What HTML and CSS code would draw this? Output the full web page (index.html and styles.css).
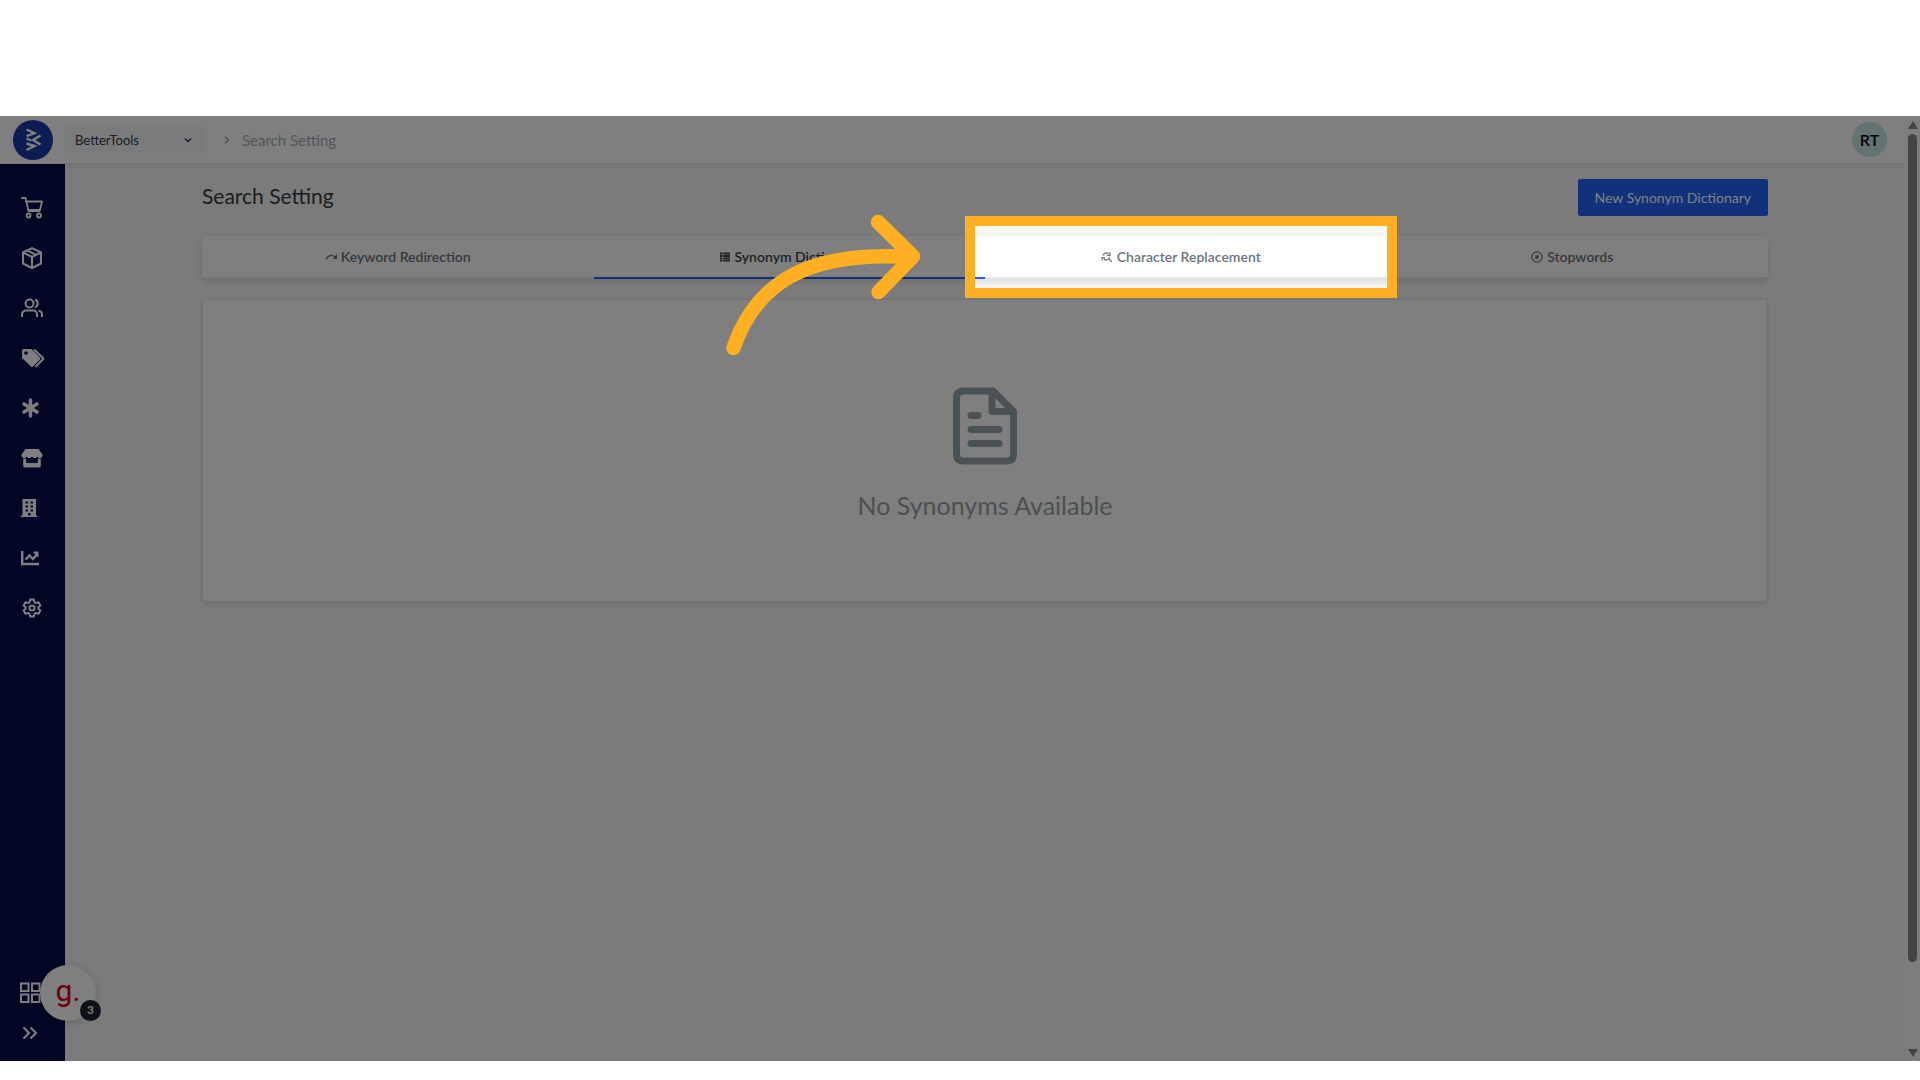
FILE: index.html
```html
<!DOCTYPE html>
<html lang="en">
<head>
<meta charset="utf-8">
<title>Search Setting</title>
<link rel="stylesheet" href="styles.css">
</head>
<body>
<div class="app">
  <div class="window">
    <header class="topbar">
      <a class="logo" href="#" aria-label="Home">
        <svg viewBox="0 0 40 40" width="40" height="40"><g fill="none" stroke="#fff" stroke-width="2.400" stroke-linejoin="miter"><path d="M13.500 9.500l8 3.700-8 3"/><path d="M27.500 15.500l-7.500 4.500 7.500 4.500"/><path d="M13.500 18.500l4.500 2M13.500 23.500l8 2.500-8 4"/></g></svg>
      </a>
      <div class="picker">
        <select class="picker-select" aria-label="Store"><option>BetterTools</option></select>
        <svg class="picker-caret" viewBox="0 0 8 8" width="8" height="8"><path d="M1 2.500l3 3 3-3" fill="none" stroke="#333c44" stroke-width="1.400"/></svg>
      </div>
      <nav class="crumbs" aria-label="Breadcrumb">
        <svg viewBox="0 0 6 8" width="6" height="8"><path d="M1 .8l3.500 3.200L1 7.200" fill="none" stroke="#9aa3ab" stroke-width="1.300"/></svg>
        <a class="crumb" href="#">Search Setting</a>
      </nav>
      <button class="avatar" type="button">RT</button>
    </header>
    <div class="below">
      <aside class="sidebar">
        <nav class="menu" aria-label="Main">
          <a class="menu-link" href="#" aria-label="Orders"><svg viewBox="0 0 22 22" width="22" height="22" fill="none" stroke="currentColor" stroke-width="1.800" stroke-linejoin="round" stroke-linecap="round"><path d="M1 1h3.500l3 13h11"/><path d="M5.300 4.500H21l-2 8.500H7.500"/><circle cx="7.500" cy="18.500" r="2"/><circle cx="18" cy="18.500" r="2"/></svg></a>
          <a class="menu-link" href="#" aria-label="Products"><svg viewBox="0 0 22 22" width="22" height="22" fill="none" stroke="currentColor" stroke-width="2" stroke-linejoin="round"><path d="M11 1.200l9 4.300v11L11 21l-9-4.500v-11z"/><path d="M2 5.500l9 4.300 9-4.300M11 9.800V21M6.300 3.600l9 4.300"/></svg></a>
          <a class="menu-link" href="#" aria-label="Customers"><svg viewBox="0 0 22 22" width="22" height="22" fill="none" stroke="currentColor" stroke-width="2"><circle cx="8.500" cy="6.500" r="4"/><path d="M1 20v-2.500a4 4 0 0 1 4-4h7a4 4 0 0 1 4 4V20M14 2.700a4 4 0 0 1 0 7.600M17.500 13.700a4 4 0 0 1 3.500 4V20"/></svg></a>
          <a class="menu-link" href="#" aria-label="Tags"><svg viewBox="0 0 24 22" width="24" height="22"><path fill="currentColor" fill-rule="evenodd" d="M2.500 2H10.500L19 10.500q1 1 0 2L12 19.500q-1 1-2 0L1 11V3.500Q1 2 2.500 2zM5 4.300a1.800 1.800 0 1 0 0 3.600 1.800 1.800 0 0 0 0-3.600z"/><path d="M13 2.500l9 8.500q.6.600 0 1.200L14.300 20" fill="none" stroke="currentColor" stroke-width="2"/></svg></a>
          <a class="menu-link" href="#" aria-label="Features"><svg viewBox="0 0 22 22" width="22" height="22" stroke="currentColor" stroke-width="3.400" stroke-linecap="round"><path d="M9.500 3v16M3 7l13 8M16 7L3 15"/></svg></a>
          <a class="menu-link" href="#" aria-label="Store"><svg viewBox="0 0 22 22" width="22" height="22" fill="currentColor"><path d="M4.500 2h13l4 5.500q.5 3-2.500 3.500-1.700 0-2.600-1.200Q15.300 11 13.700 11T11 9.800Q9.900 11 8.300 11T5.600 9.800Q4.700 11 3 11 0 10.500.5 7.500z"/><path d="M2.200 11.500h3V16h11.600v-4.500h3V19q0 1.500-1.500 1.500H3.700q-1.500 0-1.500-1.500z"/></svg></a>
          <a class="menu-link" href="#" aria-label="Company"><svg viewBox="0 0 22 22" width="22" height="22"><path fill="currentColor" fill-rule="evenodd" d="M1.500 2h13.500v16.500h1V20H0v-1.500h1.500zM4.500 4.500v2H7v-2zm5 0v2H12v-2zm-5 4v2H7v-2zm5 0v2H12v-2zm-5 4v2H7v-2zm5 0v2H12v-2zM7 16v2.500h2.500V16z"/></svg></a>
          <a class="menu-link" href="#" aria-label="Reports"><svg viewBox="0 0 22 22" width="22" height="22" fill="none" stroke="currentColor"><path d="M1.200 4v13H18" stroke-width="2.400"/><path d="M4.500 12.500l4-4 3.500 3.500 4-4.500" stroke-width="2.400"/><path d="M12.500 5H17v5z" fill="currentColor"/></svg></a>
          <a class="menu-link" href="#" aria-label="Settings"><svg viewBox="0 0 22 22" width="22" height="22" fill="none" stroke="currentColor" stroke-width="2" stroke-linejoin="round"><path d="M9.200 2.500h3.600l.6 2.700 1.600.9 2.600-.8 1.800 3.100-2 1.800v1.600l2 1.800-1.800 3.100-2.600-.8-1.600.9-.6 2.700H9.200l-.6-2.700-1.600-.9-2.600.8-1.800-3.100 2-1.800v-1.600l-2-1.800 1.800-3.100 2.600.8 1.600-.9z"/><circle cx="11" cy="11" r="2.600"/></svg></a>
        </nav>
        <div class="menu-end">
          <a class="menu-link short" href="#" aria-label="Apps"><svg viewBox="0 0 22 22" width="22" height="22" fill="none" stroke="currentColor" stroke-width="2"><path d="M1 1.500h7.500V9H1zM12 1.500h7.500V9H12zM1 12.500h7.500V20H1zM12 12.500h7.500V20H12z"/></svg></a>
          <button class="menu-link short" type="button" aria-label="Expand menu"><svg viewBox="0 0 22 22" width="22" height="22" fill="none" stroke="currentColor" stroke-width="2"><path d="M3.500 5.500L9 11l-5.500 5.500M10.500 5.500L16 11l-5.500 5.500"/></svg></button>
        </div>
        <button class="helper" type="button" aria-label="Guides"><span class="helper-mark">g.</span><span class="helper-count">3</span></button>
      </aside>
      <main class="main">
        <div class="heading">
          <h1 class="title">Search Setting</h1>
          <button class="primary" type="button">New Synonym Dictionary</button>
        </div>
        <div class="tabs">
          <div class="tab-cell"><button class="tab" type="button"><svg viewBox="0 0 12 12" width="12" height="12"><path d="M1 8q4.500-6 9-2" fill="none" stroke="currentColor" stroke-width="1.300"/><path d="M12 3v5H7.500z" fill="currentColor"/></svg>Keyword Redirection</button></div>
          <div class="tab-cell"><button class="tab active" type="button"><svg viewBox="0 0 12 12" width="12" height="12" fill="currentColor"><path d="M1 1.500h2.500v2H1zM4.200 1.500H11v2H4.200zM1 4h2.500v2H1zM4.200 4H11v2H4.200zM1 6.500h2.500v2H1zM4.200 6.500H11v2H4.200zM1 9h2.500v1.500H1zM4.200 9H11v1.500H4.200z"/></svg>Synonym Dictionary</button></div>
          <div class="tab-cell">
            <button class="tab" type="button"><svg viewBox="0 0 12 12" width="12" height="12" fill="none" stroke="currentColor" stroke-width="1.200"><path d="M2 4.500A3.200 3.200 0 0 1 7.500 3M9 1v3.300H6M8.500 6A3.200 3.200 0 0 1 3 8M1.200 9.500V6.700H4M7.500 7.500L11 11"/></svg>Character Replacement</button>
            <div class="spotlight"></div>
            <svg class="pointer" viewBox="725 213 198 144" width="198" height="144" fill="none" stroke="#feb022" stroke-width="14.500" stroke-linecap="round" stroke-linejoin="round"><path d="M733.500 348C755 285 805 250 911 257"/><path d="M878 222L913 256.500 878.500 292"/></svg>
          </div>
          <div class="tab-cell"><button class="tab" type="button"><svg viewBox="0 0 12 12" width="12" height="12"><circle cx="6" cy="6" r="5.200" fill="none" stroke="currentColor" stroke-width="1.200"/><path d="M4.300 4.300h3.400v3.400H4.300z" fill="currentColor"/></svg>Stopwords</button></div>
        </div>
        <section class="panel">
          <svg viewBox="0 0 64 78" width="64" height="78" fill="none" stroke="#97a5ac" stroke-width="7" stroke-linejoin="round"><path d="M10 4h30l20.500 20.500V67q0 7-7 7H10.500q-7 0-7-7V11q0-7 7-7z"/><path d="M39 4v20.500h21"/><path d="M18 28.500h7M18 42.500h28M18 56.500h28" stroke-linecap="round"/></svg>
          <p class="empty">No Synonyms Available</p>
        </section>
      </main>
    </div>
  </div>
  <div class="scroll" aria-hidden="true">
    <svg viewBox="0 0 10 8" width="10" height="8"><path d="M5 0l5 8H0z" fill="#888"/></svg>
    <div class="track"><div class="thumb"></div></div>
    <svg viewBox="0 0 10 8" width="10" height="8"><path d="M5 8l5-8H0z" fill="#888"/></svg>
  </div>
</div>
</body>
</html>
```
FILE: styles.css
```css
* { box-sizing: border-box; }

body {
  margin: 0;
  min-height: 100vh;
  padding: 116px 0 19px;
  display: flex;
  background: #fff;
  font-family: Lato, "Open Sans", sans-serif;
  font-size: 14px;
  color: #333c44;
}

button, select { font: inherit; color: inherit; border: 0; margin: 0; padding: 0; background: none; }
a { color: inherit; text-decoration: none; }
svg { display: block; flex: none; }

.app { flex: 1; display: flex; overflow: hidden; position: relative; background: #f7f7f8; }
.window { flex: 1; display: flex; flex-direction: column; }

/* Top bar */
.topbar {
  height: 48px;
  display: flex;
  align-items: center;
  padding: 0 18px 0 13px;
  background: #fff;
  border-bottom: 1px solid #e3e5e8;
  box-shadow: 0 2px 6px rgba(60, 70, 90, .08);
}
.logo { border-radius: 50%; background: #183aa8; margin-right: 12px; }
.picker { position: relative; width: 140px; }
.picker-select {
  width: 100%;
  height: 27px;
  padding: 0 24px 0 10px;
  appearance: none;
  background: #f4f7fa;
  border-radius: 2px;
  font-size: 13px;
}
.picker-caret { position: absolute; right: 13px; top: 10px; }
.crumbs { display: flex; align-items: center; gap: 12px; padding-left: 19px; margin-right: auto; color: #a6aeb5; font-size: 15px; }
.avatar { width: 35px; height: 35px; border-radius: 50%; background: #c6e4e7; color: #000; font-size: 16px; font-weight: 600; }

.below { flex: 1; display: flex; }

/* Side menu */
.sidebar {
  position: relative;
  width: 65px;
  display: flex;
  flex-direction: column;
  justify-content: space-between;
  padding: 19px 0 8px;
  background: #080c4c;
  color: #fff;
}
.menu-link { display: flex; align-items: center; width: 100%; height: 50px; padding-left: 21px; color: #fff; }
.menu-link.short { height: 40px; padding-left: 20px; }
.helper {
  position: absolute;
  left: 40px;
  bottom: 40px;
  width: 56px;
  height: 56px;
  border-radius: 50%;
  background: #fff;
  box-shadow: 0 2px 8px rgba(0, 0, 0, .2);
}
.helper-mark { display: block; color: #d8000c; font-family: Roboto, sans-serif; font-size: 30px; line-height: 44px; font-weight: 400; padding-bottom: 4px; }
.helper-count {
  position: absolute;
  right: -5px;
  bottom: 0;
  width: 21px;
  height: 21px;
  border-radius: 50%;
  background: #1a2230;
  color: #fff;
  font-size: 12px;
  line-height: 20px;
  font-weight: 700;
}

/* Content */
.main { flex: 1; padding: 15px 137px 40px; }
.heading { display: flex; justify-content: space-between; align-items: flex-start; margin-bottom: 20px; }
.title { margin: 0; padding-top: 5px; font-size: 21px; line-height: 24px; font-weight: 400; }
.primary { height: 37px; padding: 0 17px; border-radius: 2px; background: #2262f6; color: #fff; font-size: 14px; }

.tabs {
  display: grid;
  grid-template-columns: repeat(4, 1fr);
  margin-bottom: 20px;
  border-radius: 4px;
  background: #fff;
  box-shadow: 0 3px 6px rgba(60, 70, 90, .16);
}
.tab-cell { position: relative; }
.tab {
  display: flex;
  align-items: center;
  justify-content: center;
  gap: 4px;
  width: 100%;
  height: 43px;
  border-bottom: 2px solid #e4e7eb;
  color: #6a747c;
  font-weight: 600;
}
.tab.active { color: #3c454d; border-bottom-color: #2262f6; }

/* Tour step: the spread shadow dims everything outside the frame */
.spotlight {
  position: absolute;
  z-index: 5;
  inset: -20px -20px -19px;
  border: 10px solid #feb022;
  box-shadow: 0 0 0 4000px rgba(0, 0, 0, .5);
  pointer-events: none;
}
.pointer { position: absolute; z-index: 6; left: -260px; top: -23px; }

.panel {
  display: flex;
  flex-direction: column;
  align-items: center;
  gap: 24px;
  padding: 87px 20px 80px;
  background: #fff;
  border: 1px solid #e3e5e9;
  border-radius: 4px;
  box-shadow: 0 2px 5px rgba(60, 70, 90, .14);
}
.empty { margin: 0; font-size: 25px; line-height: 32px; color: #97a1a9; }

/* Scroll bar */
.scroll { width: 15px; display: flex; flex-direction: column; align-items: center; gap: 5px; padding: 5px 0 4px; background: #fbfbfb; }
.track { flex: 1; }
.thumb { width: 9px; height: 91%; border-radius: 5px; background: #888; }
```
